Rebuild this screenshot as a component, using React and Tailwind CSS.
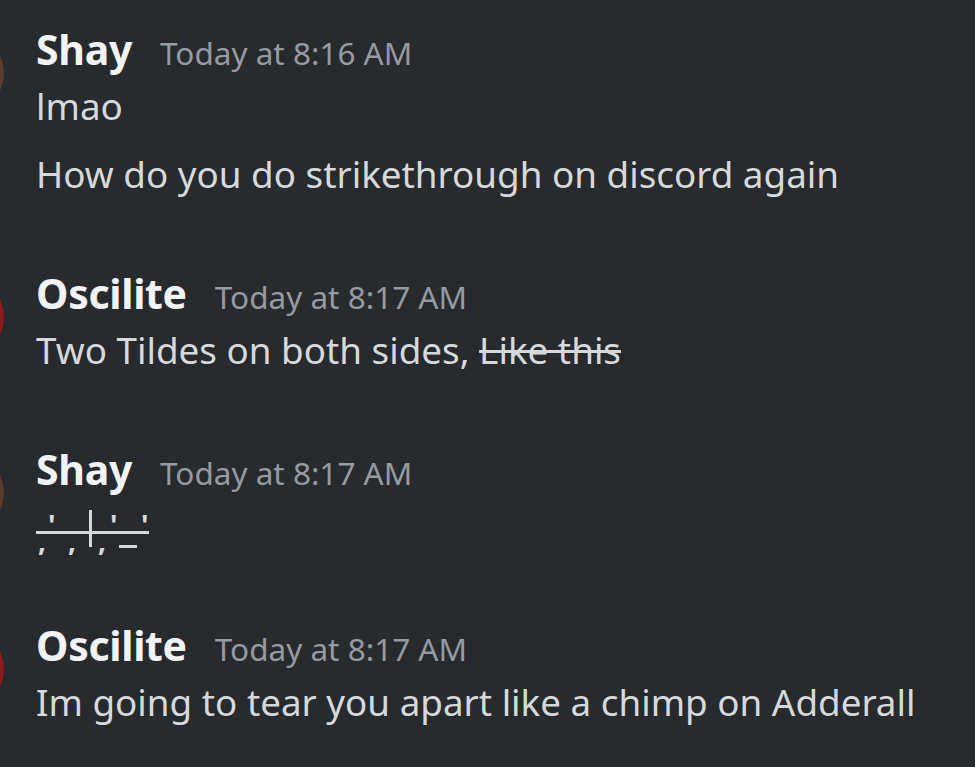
const messages = [
  { name: 'Shay', time: 'Today at 8:16 AM', avatar: 'bg-[#5b3b2b]', lines: ['lmao', 'How do you do strikethrough on discord again'] },
  { name: 'Oscilite', time: 'Today at 8:17 AM', avatar: 'bg-[#8e1b1e]', lines: ['strike'] },
  { name: 'Shay', time: 'Today at 8:17 AM', avatar: 'bg-[#5b3b2b]', lines: ['marks'] },
  { name: 'Oscilite', time: 'Today at 8:17 AM', avatar: 'bg-[#8e1b1e]', lines: ['Im going to tear you apart like a chimp on Adderall'] },
];

function Marks() {
  // the mangled tildes message, drawn as loose glyphs with a strike line
  const top = [48, 110, 141];
  const bottom = [38, 68, 98];
  return (
    <span className="relative inline-block w-[114px] h-[42px] align-middle text-[#d6d9dc] font-bold">
      {top.map((x) => (
        <span key={'t' + x} className="absolute top-[0px] text-[28px] leading-none" style={{ left: x - 36 }}>'</span>
      ))}
      {bottom.map((x) => (
        <span key={'b' + x} className="absolute top-[15px] text-[28px] leading-none" style={{ left: x - 36 }}>,</span>
      ))}
      <span className="absolute left-[53px] top-[-1px] w-[3px] h-[37px] bg-[#d6d9dc]" />
      <span className="absolute left-[83px] top-[34px] w-[18px] h-[3px] bg-[#d6d9dc]" />
      <span className="absolute left-0 top-[20px] w-[113px] h-[3px] bg-[#d6d9dc]" />
    </span>
  );
}

function Line({ text }) {
  if (text === 'strike') {
    return (
      <p>
        Two Tildes on both sides, <span className="line-through decoration-[3px]">Like this</span>
      </p>
    );
  }
  if (text === 'marks') return <div className="h-[48px] flex items-center pt-[12px]"><Marks /></div>;
  return <p>{text}</p>;
}

export default function App() {
  return (
    <div className="w-[975px] h-[767px] overflow-hidden bg-[#282b2e] font-['Noto_Sans',sans-serif] pt-[25px]">
      <div className="flex flex-col gap-[71px]">
        {messages.map((m, i) => (
          <div key={i} className="flex">
            <div className={`w-[80px] h-[80px] rounded-full ${m.avatar} -ml-[76px] mt-[8px] shrink-0`} />
            <div className="ml-[32px] flex flex-col">
              <div className="flex items-baseline gap-[28px] h-[48px]">
                <span className="text-[41px] font-bold text-[#f2f3f5] leading-[48px] tracking-[-0.3px]">{m.name}</span>
                <span className="text-[31.5px] text-[#969aa1] leading-[48px]">{m.time}</span>
              </div>
              <div className="flex flex-col gap-[20px] mt-[9px] text-[36.8px] text-[#d6d9dc] leading-[48px]">
                {m.lines.map((l, j) => (
                  <Line key={j} text={l} />
                ))}
              </div>
            </div>
          </div>
        ))}
      </div>
    </div>
  );
}
